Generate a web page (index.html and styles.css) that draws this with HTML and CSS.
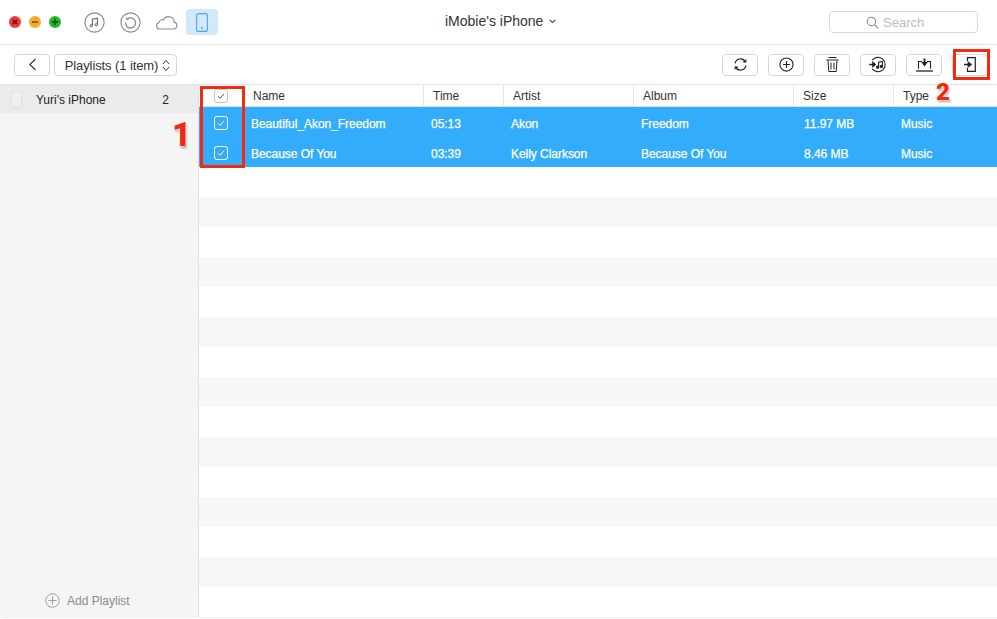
FILE: index.html
```html
<!DOCTYPE html>
<html lang="en">
<head>
<meta charset="utf-8">
<title>iMobie's iPhone</title>
<link rel="stylesheet" href="styles.css">
</head>
<body>
<div class="app">
  <header class="titlebar">
    <div class="lights">
      <span class="light red"><svg viewBox="0 0 12 12"><path d="M3.800 3.800l4.400 4.400M8.200 3.800L3.800 8.200" stroke="#7d1010" stroke-width="1.800"/></svg></span>
      <span class="light yellow"><svg viewBox="0 0 12 12"><path d="M3 6h6" stroke="#8a5a08" stroke-width="1.800"/></svg></span>
      <span class="light green"><svg viewBox="0 0 12 12"><path d="M2.800 6h6.400M6 2.800v6.400" stroke="#0b5c0b" stroke-width="1.800"/></svg></span>
    </div>
    <div class="modes">
      <span class="mode"><svg width="21" height="21" viewBox="0 0 21 21" fill="none" stroke="#8a8a8a"><circle cx="10.500" cy="10.500" r="9.600" stroke-width="1.100"/><path d="M8.400 13.700V7.300l5-1.100v6.400" stroke="#666" stroke-width="1.100"/><ellipse cx="7.200" cy="13.800" rx="1.300" ry="1.100" stroke="#666"/><ellipse cx="12.200" cy="12.800" rx="1.300" ry="1.100" stroke="#666"/></svg></span>
      <span class="mode"><svg width="21" height="21" viewBox="0 0 21 21" fill="none" stroke="#8a8a8a"><circle cx="10.500" cy="10.500" r="9.600" stroke-width="1.100"/><path d="M7.300 7.200A5 5 0 1 1 5.600 10.500" stroke-width="1.300"/><path d="M5.800 5.600l1.700 1.800 1.600-1.600" stroke-width="1.100"/></svg></span>
      <span class="mode"><svg width="23" height="15" viewBox="0 0 23 15" fill="none" stroke="#8f8f8f" stroke-width="1.100"><path d="M5 14h13.600a3.500 3.500 0 0 0 .6-6.900 5.600 5.600 0 0 0-10.600-2.300 3.500 3.500 0 0 0-4.600 2.900A3.200 3.200 0 0 0 5 14z"/></svg></span>
      <span class="mode active"><svg width="12" height="19" viewBox="0 0 12 19" fill="none"><rect x=".6" y=".6" width="10.800" height="17.800" rx="2" stroke="#4aa8ea" stroke-width="1.100"/><circle cx="6" cy="15" r="1" fill="#4aa8ea"/></svg></span>
    </div>
    <div class="device-name">iMobie's iPhone <svg class="chev" width="7" height="5" viewBox="0 0 7 5" fill="none"><path d="M.8 1l2.700 2.600L6.200 1" stroke="#444" stroke-width="1.100"/></svg></div>
    <div class="search"><svg width="13" height="13" viewBox="0 0 13 13" fill="none" stroke="#8c8c8c" stroke-width="1.100"><circle cx="5.400" cy="5.400" r="4.200"/><path d="M8.500 8.500l3.800 3.800"/></svg><span>Search</span></div>
  </header>

  <div class="toolbar">
    <div class="nav-left">
      <span class="btn back"><svg width="9" height="13" viewBox="0 0 9 13" fill="none"><path d="M7.500 1L1.800 6.500l5.700 5.500" stroke="#333" stroke-width="1.100"/></svg></span>
      <span class="btn select">Playlists (1 item)<svg width="8" height="13" viewBox="0 0 8 13" fill="none" stroke="#333"><path d="M1 5l3-3.500L7 5M1 8l3 3.500L7 8"/></svg></span>
    </div>
    <div class="actions">
      <span class="btn act"><svg width="15" height="15" viewBox="0 0 17 17" fill="none" stroke="#222" stroke-width="1.300"><path d="M2.300 7.300a6.300 6.300 0 0 1 11.700-1.800M14.700 9.700A6.300 6.300 0 0 1 3 11.500"/><path d="M14.800 2.800l-.5 3-3-.4M2.200 14.200l.5-3 3 .4"/></svg></span>
      <span class="btn act"><svg width="15" height="15" viewBox="0 0 16 16" fill="none" stroke="#222" stroke-width="1.200"><circle cx="8" cy="8" r="7"/><path d="M8 4.200v7.600M4.200 8h7.600"/></svg></span>
      <span class="btn act"><svg width="13" height="15" viewBox="0 0 13 15" fill="none" stroke="#222" stroke-width="1"><path d="M.5 3h12M2.500 .5h8" /><path d="M2 3.500l.8 11h7.400l.8-11M5 5.500v7M8 5.500v7"/></svg></span>
      <span class="btn act"><svg width="18" height="17" viewBox="0 0 18 17" fill="none" stroke="#222" stroke-width="1.100"><path d="M3.200 4.200a7.200 7.200 0 1 1 0 8.600"/><path d="M.2 8.500h5.500" stroke-width="1.400"/><path d="M3.800 6.200l2.600 2.300-2.600 2.300z" fill="#222"/><path d="M9.600 11.200V6.300l3.800-.9v5" /><circle cx="8.600" cy="11.200" r="1.100" fill="#222"/><circle cx="12.400" cy="10.400" r="1.100" fill="#222"/></svg></span>
      <span class="btn act"><svg width="17" height="14" viewBox="0 0 17 14" fill="none" stroke="#222" stroke-width="1.100"><path d="M0 13h17" stroke-width="1.300"/><path d="M2.500 10.800V3.500h3.500M11 3.500h3.500v7.300"/><path d="M8.500 .5v5" stroke-width="1.800"/><path d="M6.300 4.500l2.200 3 2.200-3z" fill="#222"/></svg></span>
      <span class="btn act"><svg width="12" height="15" viewBox="0 0 12 15" fill="none" stroke="#222" stroke-width="1.200"><path d="M3.500 4V.7h7.800v13.600H3.500V11"/><path d="M0 7.500h5" stroke-width="1.500"/><path d="M4.200 5.200l3 2.300-3 2.300z" fill="#222"/></svg></span>
    </div>
  </div>

  <div class="main">
    <aside class="sidebar">
      <div class="device-row">
        <svg width="11" height="17" viewBox="0 0 11 17" fill="none"><rect x=".5" y=".5" width="10" height="16" rx="1.500" fill="#f0f0f0" stroke="#e0e0e0"/></svg>
        <span class="device-label">Yuri's iPhone</span>
        <span class="device-count">2</span>
      </div>
      <div class="add-playlist">
        <svg width="15" height="15" viewBox="0 0 16 16" fill="none" stroke="#9a9a9a"><circle cx="8" cy="8" r="7.200"/><path d="M8 3.500v9M3.500 8h9"/></svg>
        <span>Add Playlist</span>
      </div>
    </aside>
    <section class="table">
      <div class="row head">
        <span class="cell check"><i class="box"><svg viewBox="0 0 12 12" fill="none"><path d="M3 6.200l2.100 2.100L9 3.800" stroke="#444"/></svg></i></span>
        <span class="cell">Name</span><span class="cell">Time</span><span class="cell">Artist</span><span class="cell">Album</span><span class="cell">Size</span><span class="cell">Type</span>
      </div>
      <div class="row sel">
        <span class="cell check"><i class="box"><svg viewBox="0 0 12 12" fill="none"><path d="M3 6.200l2.100 2.100L9 3.800" stroke="#fff"/></svg></i></span>
        <span class="cell">Beautiful_Akon_Freedom</span><span class="cell">05:13</span><span class="cell">Akon</span><span class="cell">Freedom</span><span class="cell size">11.97 MB</span><span class="cell">Music</span>
      </div>
      <div class="row sel">
        <span class="cell check"><i class="box"><svg viewBox="0 0 12 12" fill="none"><path d="M3 6.200l2.100 2.100L9 3.800" stroke="#fff"/></svg></i></span>
        <span class="cell">Because Of You</span><span class="cell">03:39</span><span class="cell">Kelly Clarkson</span><span class="cell">Because Of You</span><span class="cell size">8.46 MB</span><span class="cell">Music</span>
      </div>
      <div class="stripes">
        <div></div><div></div><div></div><div></div><div></div><div></div><div></div><div></div><div></div><div></div><div></div><div></div><div></div><div></div><div></div>
      </div>
    </section>
  </div>
  <div class="bottom-edge"></div>

  <div class="mark mark-1"></div>
  <div class="mark mark-2"></div>
  <span class="num num-1">1</span>
  <span class="num num-2">2</span>
</div>
</body>
</html>
```
FILE: styles.css
```css
* { box-sizing: border-box; }
html, body { margin: 0; padding: 0; }
body { width: 997px; height: 619px; overflow: hidden; background: #fff; font-family: "Liberation Sans", Arial, sans-serif; color: #2b2b2b; }
.app { position: relative; width: 997px; height: 619px; display: flex; flex-direction: column; }

.titlebar { position: relative; height: 45px; flex: none; display: flex; align-items: center; border-bottom: 1px solid #e2e2e2; padding-left: 9px; }
.lights { display: flex; gap: 8px; }
.light { width: 12px; height: 12px; border-radius: 50%; display: block; }
.light svg { display: block; width: 12px; height: 12px; }
.red { background: #ee3b3f; }
.yellow { background: #f5ac2a; }
.green { background: #22b92d; }
.modes { display: flex; align-items: center; margin-left: 17px; }
.mode { width: 32px; height: 26px; margin-right: 4px; border-radius: 4px; display: flex; align-items: center; justify-content: center; }
.mode.active { background: #d2e9fb; }
.device-name { position: absolute; left: 445px; top: 13px; font-size: 14px; line-height: 16px; color: #333; white-space: nowrap; }
.chev { margin-left: 2px; vertical-align: 2px; }
.search { margin-left: auto; margin-right: 19px; width: 149px; height: 22px; border: 1px solid #d9d9d9; border-radius: 4px; display: flex; align-items: center; padding-left: 36px; gap: 4px; font-size: 13px; color: #bdbdbd; background: #fff; }

.toolbar { height: 40px; flex: none; display: flex; justify-content: space-between; align-items: center; padding: 0 9px 0 14px; border-bottom: 1px solid #e2e2e2; }
.nav-left { display: flex; gap: 4px; }
.actions { display: flex; gap: 10px; }
.btn { height: 22px; border: 1px solid #d6d6d6; border-radius: 4px; display: flex; align-items: center; justify-content: center; background: #fff; }
.back { width: 36px; }
.select { width: 123px; gap: 4px; padding: 1px 0 0 4px; font-size: 13px; letter-spacing: -.1px; color: #333; }
.act { width: 36px; }

.main { flex: 1; display: flex; min-height: 0; }
.sidebar { width: 199px; flex: none; background: #f5f5f5; border-right: 1px solid #e2e2e2; border-bottom-left-radius: 3px; display: flex; flex-direction: column; }
.device-row { height: 28px; background: #ebebeb; display: flex; align-items: center; padding: 2px 29px 0 11px; font-size: 12px; color: #222; }
.device-row svg { margin-top: -2px; }
.device-label { margin-left: 14px; flex: 1; }
.device-count { font-size: 12px; }
.add-playlist { margin-top: auto; margin-bottom: 9px; padding-left: 45px; display: flex; align-items: center; gap: 7px; font-size: 12px; color: #8a8a8a; }
.bottom-edge { height: 2px; flex: none; background: #fff; border-top: 1px solid #f0f0f0; }

.table { flex: 1; min-width: 0; overflow: hidden; }
.row { display: grid; grid-template-columns: 44px 180px 80px 130px 160px 100px 104px; align-items: center; }
.head { height: 22px; border-bottom: 1px solid #e2e2e2; font-size: 12px; color: #333; }
.head .cell { height: 21px; line-height: 23px; padding-left: 9px; border-left: 1px solid #e6e6e6; }
.head .check { border-left: 0; padding: 0; line-height: normal; }
.sel { height: 30px; background: #33acfb; color: #fff; font-size: 12px; letter-spacing: -.04px; }
.sel .cell { padding: 3px 0 0 8px; -webkit-text-stroke: .25px #fff; }
.sel .check { padding: 2px 0 0; }
.sel .size { padding-left: 11px; }
.check { display: flex; align-items: center; justify-content: center; }
.box { width: 14px; height: 14px; border: 1px solid #c4c4c4; border-radius: 3px; display: block; background: #fff; }
.box svg { display: block; width: 12px; height: 12px; }
.sel .box { border-color: #fff; background: transparent; }
.stripes div { height: 30px; background: #fff; }
.stripes div:nth-child(even) { background: #f8f8f8; }

.mark { position: absolute; border: 3px solid #ef2b12; }
.mark-1 { left: 200px; top: 86px; width: 45px; height: 82px; }
.mark-2 { left: 953px; top: 49px; width: 37px; height: 31px; }
.num { position: absolute; font-family: Roboto, "Liberation Sans", sans-serif; font-weight: 900; color: #f0290f; text-shadow: 0 0 2px #fff, 0 0 3px #fff, 1px 2px 2px rgba(0,0,0,.4); line-height: 1; }
.num-1 { left: 172px; top: 118px; font-size: 33px; }
.num-2 { left: 936px; top: 80px; font-size: 24px; }
```
